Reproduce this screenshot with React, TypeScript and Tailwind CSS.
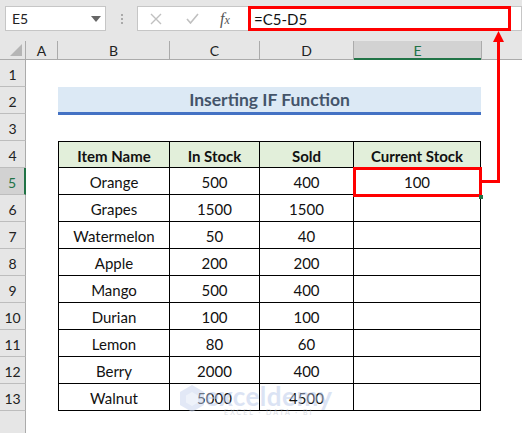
import React from 'react';

const font = { fontFamily: 'Lato, "Liberation Sans", sans-serif' };

const colWidths = ['w-[32px]', 'w-[112px]', 'w-[90px]', 'w-[94px]', 'w-[127px]'];
const colNames = ['A', 'B', 'C', 'D', 'E'];

const items: [string, string, string, string][] = [
  ['Orange', '500', '400', '100'],
  ['Grapes', '1500', '1500', ''],
  ['Watermelon', '50', '40', ''],
  ['Apple', '200', '200', ''],
  ['Mango', '500', '400', ''],
  ['Durian', '100', '100', ''],
  ['Lemon', '80', '60', ''],
  ['Berry', '2000', '400', ''],
  ['Walnut', '5000', '4500', ''],
];

const RowHead = ({ n, selected }: { n?: number; selected?: boolean }) => (
  <div
    className={`w-[26px] shrink-0 flex items-center justify-center pt-[3px] text-[14px] border-b ${
      selected
        ? 'bg-[#d2d2d2] text-[#217346] border-r-2 border-r-[#217346] border-b-[#bdbdbd]'
        : 'bg-[#e6e6e6] text-[#222] border-r border-r-[#ababab] border-b-[#bdbdbd]'
    }`}
  >
    {n}
  </div>
);

const Cell = ({ w, children, className = '' }: { w: string; children?: React.ReactNode; className?: string }) => (
  <div className={`${w} shrink-0 flex items-center justify-center pt-[3px] text-[15px] text-[#111] ${className}`}>{children}</div>
);

const App: React.FC = () => {
  return (
    <div className="relative w-[522px] h-[433px] overflow-hidden bg-white" style={font}>
      {/* formula bar */}
      <div className="h-[41px] bg-[#e6e6e6] flex items-start pt-[6px] pl-[5px]">
        <div className="w-[101px] h-[25px] bg-white border border-[#c6c6c6] flex items-center justify-between pl-[6px] pr-[4px]">
          <span className="text-[14px] text-[#222]">E5</span>
          <svg width="10" height="6" viewBox="0 0 10 6"><path d="M0 0h10L5 6z" fill="#666" /></svg>
        </div>
        <div className="w-[31px] h-[25px] flex flex-col items-center justify-center gap-[2px]">
          <span className="w-[2px] h-[2px] bg-[#aaa]" />
          <span className="w-[2px] h-[2px] bg-[#aaa]" />
          <span className="w-[2px] h-[2px] bg-[#aaa]" />
        </div>
        <div className="flex-1 h-[25px] bg-white border border-[#c6c6c6] flex items-stretch">
          <div className="w-[110px] flex items-center">
            <svg className="ml-[12px]" width="12" height="12" viewBox="0 0 12 12">
              <path d="M1 1l10 10M11 1L1 11" stroke="#c0c0c0" strokeWidth="1.4" />
            </svg>
            <svg className="ml-[24px]" width="13" height="11" viewBox="0 0 13 11">
              <path d="M1 6l3.5 4L12 1" stroke="#c0c0c0" strokeWidth="1.6" fill="none" />
            </svg>
            <span className="ml-[21px] text-[16px] italic text-[#555]" style={{ fontFamily: '"Liberation Serif", serif' }}>
              f<span className="text-[12px]">x</span>
            </span>
          </div>
          <div className="w-[263px] -mt-[1px] -mb-[1px] border-[3px] border-[#ff0000] flex items-center pl-[3px] pt-[1px] text-[15px] text-[#111]">
            =C5-D5
          </div>
        </div>
      </div>

      {/* column headers */}
      <div className="flex h-[19px] bg-[#e6e6e6] border-b border-[#ababab]">
        <div className="w-[26px] shrink-0 border-r border-[#ababab] relative">
          <svg className="absolute right-[3px] bottom-[3px]" width="12" height="12" viewBox="0 0 12 12">
            <path d="M12 0v12H0z" fill="#b5b5b5" />
          </svg>
        </div>
        {colNames.map((c, i) =>
          c === 'E' ? (
            <div
              key={c}
              className={`${colWidths[i]} shrink-0 bg-[#d2d2d2] border-b-2 border-[#217346] -mb-[1px] flex items-center justify-center pt-[1px] text-[14px] text-[#217346]`}
            >
              {c}
            </div>
          ) : (
            <div key={c} className={`${colWidths[i]} shrink-0 border-r border-[#ababab] flex items-center justify-center pt-[1px] text-[14px] text-[#222]`}>
              {c}
            </div>
          )
        )}
        <div className="flex-1 border-l border-[#ababab]" />
      </div>

      {/* row 1 */}
      <div className="flex h-[27px]">
        <RowHead n={1} />
      </div>
      {/* row 2: title */}
      <div className="flex h-[27px]">
        <RowHead n={2} />
        <Cell w="w-[32px]" />
        <div className="w-[423px] shrink-0 bg-[#dce9f5] border-b-[3px] border-[#4472c4] -mb-[1px] flex items-center justify-center pt-[2px] text-[17.5px] font-bold text-[#44546a]">
          Inserting IF Function
        </div>
      </div>
      {/* row 3 */}
      <div className="flex h-[27px]">
        <RowHead n={3} />
      </div>
      {/* row 4: header */}
      <div className="flex h-[27px]">
        <RowHead n={4} />
        <Cell w="w-[32px]" />
        {['Item Name', 'In Stock', 'Sold', 'Current Stock'].map((h, i) => (
          <Cell
            key={h}
            w={colWidths[i + 1]}
            className={`bg-[#e2efda] font-bold border-t border-r border-b border-black ${i === 0 ? 'border-l' : ''}`}
          >
            {h}
          </Cell>
        ))}
      </div>
      {items.map((r, ri) => (
        <div key={r[0]} className="flex h-[27px]">
          <RowHead n={ri + 5} selected={ri === 0} />
          <Cell w="w-[32px]" />
          {r.map((v, i) => (
            <Cell key={i} w={colWidths[i + 1]} className={`border-r border-b border-black ${i === 0 ? 'border-l' : ''}`}>
              {v}
            </Cell>
          ))}
        </div>
      ))}
      <div className="flex h-[30px]">
        <RowHead />
      </div>

      {/* selection highlight around E5 */}
      <div className="absolute left-[353px] top-[167px] w-[129px] h-[30px] border-[3px] border-[#ff0000] pointer-events-none" />
      <div className="absolute left-[479px] top-[195px] w-[4px] h-[4px] bg-[#217346]" />

      {/* arrow */}
      <svg className="absolute left-0 top-0 pointer-events-none" width="522" height="433">
        <path d="M482 181.5H498.5V40" stroke="#ff0000" strokeWidth="3" fill="none" />
        <path d="M493 42L498.5 31L504 42z" fill="#ff0000" />
      </svg>

      {/* watermark */}
      <div className="absolute left-[178px] top-[384px] flex items-start pointer-events-none opacity-50">
        <svg width="28" height="28" viewBox="0 0 28 28">
          <path d="M14 1L26 8v13l-12 7L2 21V8z" fill="#c6d3ee" />
          <path d="M14 8l6 3.5v7L14 22l-6-3.5v-7z" fill="#dfe7f6" />
        </svg>
        <div className="flex flex-col items-center -ml-[1px]">
          <span className="text-[26px] leading-[24px] font-bold text-[#b9c9ea] tracking-[0.5px]">exceldemy</span>
          <span className="text-[7px] leading-[9px] text-[#b9c0cc] tracking-[2px]">EXCEL · DATA · BI</span>
        </div>
      </div>
    </div>
  );
};

export default App;
